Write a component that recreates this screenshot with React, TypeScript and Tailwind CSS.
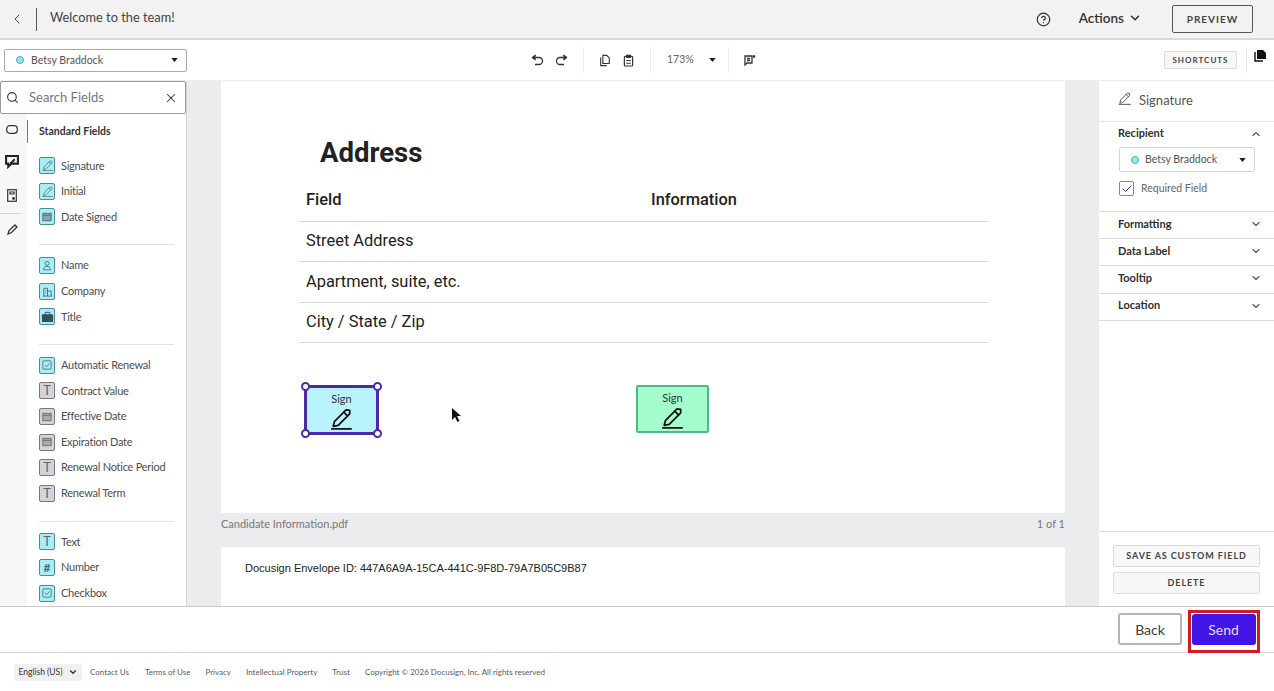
import React from "react";
import { ChevronLeft, ChevronDown, ChevronUp, CircleHelp, Search, X, Check } from "lucide-react";

const Pen = ({ size = 12, sw = 1.5 }: { size?: number; sw?: number }) => (
  <svg width={size} height={size} viewBox="0 0 24 24" fill="none" stroke="currentColor" strokeWidth={sw} strokeLinejoin="round" strokeLinecap="round">
    <path d="M3.5 20 L5 14.5 L17.5 2 L21.5 2.5 L21.5 6.5 L9 19 Z" />
    <path d="M15 4.5 L19 8.5" />
    <path d="M2 22.8 H23" />
  </svg>
);

const Caret = () => (
  <svg width="7" height="4" viewBox="0 0 8 5" className="shrink-0"><path d="M0 0H8L4 5Z" fill="#1c1c1c" /></svg>
);

const Glyph = ({ k }: { k: string }) => {
  const c = "#4d6670";
  if (k === "T") return <span className="text-[13px] leading-none text-[#5c6670]">T</span>;
  if (k === "#") return <span className="text-[12px] font-bold leading-none text-[#4d6670]">#</span>;
  if (k === "pen") return <span className="text-[#4d6670]"><Pen size={11} /></span>;
  if (k === "date") return <svg width="10" height="10" viewBox="0 0 12 12"><rect x="1" y="1.5" width="10" height="9" fill="#8aa3ad" stroke={c} /><path d="M1 4H11" stroke={c} /></svg>;
  if (k === "dategray") return <svg width="10" height="10" viewBox="0 0 12 12"><rect x="1" y="1.5" width="10" height="9" fill="#a9a9af" stroke="#66666c" /><path d="M1 4H11" stroke="#66666c" /></svg>;
  if (k === "user") return <svg width="10" height="11" viewBox="0 0 12 12" fill="none" stroke={c}><circle cx="6" cy="3.5" r="2.4" /><path d="M2 11.2C2 8.5 3.5 7 6 7s4 1.5 4 4.2z" /></svg>;
  if (k === "co") return <svg width="11" height="11" viewBox="0 0 12 12" fill="none" stroke={c}><path d="M2 11V2.5h4V11M6 5.5h4V11M1 11h10M3.5 5h1M3.5 7.5h1" /></svg>;
  if (k === "bag") return <svg width="13" height="12" viewBox="0 0 14 12"><rect x="1" y="3" width="12" height="8.5" rx="1" fill="#34505a" /><path d="M4.5 3.5V1h5v2.5" fill="none" stroke="#34505a" /></svg>;
  return <svg width="10" height="10" viewBox="0 0 12 12" fill="none" stroke={c}><rect x="1" y="1" width="10" height="10" rx="1" /><path d="M3.5 6l2 2 3.5-4" /></svg>;
};

const Field = ({ label, k, gray }: { label: string; k: string; gray?: boolean }) => (
  <div className="flex h-[25.6px] items-center gap-[6px]">
    <span className={`flex h-[17px] w-[16px] shrink-0 items-center justify-center rounded-[2px] border ${gray ? "border-[#77777d] bg-[#d3d3d8]" : "border-[#4a8c9b] bg-[#a9eef7]"}`}>
      <Glyph k={k} />
    </span>
    <span className="whitespace-nowrap text-[11px] tracking-[-0.25px] text-[#4d4d52]">{label}</span>
  </div>
);

const Sep = () => <span className="block h-[26px] w-px bg-[#ececec]" />;

const Acc = ({ label }: { label: string }) => (
  <div className="flex h-[27.2px] shrink-0 items-center justify-between border-b border-[#dcdcdc] pb-[2px] pl-[19px] pr-[12px]">
    <span className="text-[11px] font-bold text-[#2f2f33]">{label}</span>
    <ChevronDown size={12} strokeWidth={2.2} className="text-[#55555a]" />
  </div>
);

const Row = ({ text }: { text: string }) => (
  <div className="flex h-[40.4px] items-center border-b border-[#d8d8d8] pl-[7px] text-[16.4px] text-[#222]">{text}</div>
);

const Sign = ({ tone }: { tone: "blue" | "green" }) => (
  <div className={`flex flex-col items-center ${tone === "blue" ? "h-[50px] w-[75px] border-[3px] border-[#4a2aa8] bg-[#b9f3fd] pt-[4px]" : "h-[48px] w-[73px] rounded-[2px] border-2 border-[#4cb98a] bg-[#a3fdcd] pt-[4px]"}`}>
    <span className="text-[11px] leading-[14px] text-[#333]">Sign</span>
    <span className="-ml-[2px] mt-[2px] text-[#111]"><Pen size={22} sw={1.9} /></span>
  </div>
);

const Handle = ({ cls }: { cls: string }) => (
  <span className={`absolute h-[9px] w-[9px] rounded-full border-2 border-[#4a2aa8] bg-white ${cls}`} />
);

const Undo = ({ flip }: { flip?: boolean }) => (
  <svg width="13" height="12" viewBox="0 0 13 12" fill="none" stroke="#333" strokeWidth="1.3" className={flip ? "-scale-x-100" : ""}>
    <path d="M1.5 3.5H8a3.5 3.5 0 0 1 0 7H4" />
    <path d="M4.5 1L1.5 3.5L4.5 6" fill="#333" />
  </svg>
);

export default function App() {
  return (
    <div className="flex h-[691px] w-[1274px] flex-col overflow-hidden bg-white font-['Lato','Noto_Sans',sans-serif] text-[#333]">
      {/* header */}
      <header className="flex h-[40px] shrink-0 items-center border-b-2 border-[#d9d9db] bg-[#f2f2f2] pr-[21px]">
        <ChevronLeft size={16} strokeWidth={1.5} className="ml-[9px] text-[#444]" />
        <span className="ml-[11px] h-[23px] w-px bg-[#555]" />
        <span className="mb-[2px] ml-[13px] text-[12.8px] text-[#444]">Welcome to the team!</span>
        <CircleHelp size={15} strokeWidth={2} className="ml-auto text-[#333]" />
        <span className="mb-[2px] ml-[28px] flex items-center gap-[4px] text-[13.5px] font-semibold text-[#333]">Actions <ChevronDown size={14} strokeWidth={2.6} /></span>
        <button className="ml-[30px] h-[28px] w-[81px] rounded-[2px] border border-[#555] text-[10px] font-bold tracking-[1px] text-[#444]">PREVIEW</button>
      </header>

      {/* toolbar */}
      <div className="flex h-[41px] shrink-0 items-center border-b border-[#eeeeee] pl-[4px] pr-[7px]">
        <div className="flex h-[23px] w-[183px] items-center rounded-[2px] border border-[#a9a9ad] pl-[11px] pr-[8px]">
          <span className="h-[8px] w-[8px] rounded-full border border-[#4fa9c2] bg-[#8feaf5]" />
          <span className="ml-[7px] pt-[1px] text-[10.5px] text-[#555]">Betsy Braddock</span>
          <span className="ml-auto"><Caret /></span>
        </div>
        <div className="ml-[344px] flex items-center text-[#333]">
          <Undo />
          <span className="ml-[11px]"><Undo flip /></span>
          <span className="mx-[15px]"><Sep /></span>
          <svg width="12" height="13" viewBox="0 0 14 14" fill="none" stroke="#333" strokeWidth="1.3"><path d="M4.5 1H9l3 3v6.5H4.5z" /><path d="M2 3.5V13h7" /></svg>
          <svg width="11" height="13" viewBox="0 0 12 14" fill="none" stroke="#333" strokeWidth="1.3" className="ml-[12px]"><rect x="1.5" y="2.5" width="9" height="10.5" rx="1" /><path d="M4 1.5h4v2H4zM3.5 7h5M3.5 10h5" /></svg>
          <span className="mx-[16px]"><Sep /></span>
          <span className="text-[10.5px] text-[#666]">173%</span>
          <span className="ml-[15px]"><Caret /></span>
          <span className="ml-[12px] mr-[15px]"><Sep /></span>
          <svg width="12" height="12" viewBox="0 0 12 12" fill="none" stroke="#333" strokeWidth="1.3"><path d="M1 2h7v7H3l-2 2zM3 4.5h3M3 6.5h3" /><path d="M10 1v3M8.8 2.5h2.4" /></svg>
        </div>
        <button className="ml-auto h-[18px] w-[73px] rounded-[1px] border border-[#dcdcdc] bg-[#f7f7f7] text-[8px] font-bold tracking-[1px] text-[#444]">SHORTCUTS</button>
        <span className="ml-[9px]"><Sep /></span>
        <span className="mb-[10px] ml-[7px]">
          <svg width="13" height="13" viewBox="0 0 13 13"><path d="M3 1h6l3 3v6H3z" fill="#111" /><path d="M1 3v9h8" fill="none" stroke="#111" strokeWidth="1.4" /></svg>
        </span>
      </div>

      {/* main */}
      <div className="flex h-[526px] shrink-0 border-b border-[#c9c9cb]">
        {/* left panel */}
        <aside className="flex w-[187px] shrink-0 flex-col overflow-hidden border-r border-[#d4d4d6]">
          <div className="flex h-[33px] shrink-0 items-center rounded-[2px] border border-[#9a9a9e] bg-white pl-[5px] pr-[7px]">
            <Search size={13} strokeWidth={2} className="text-[#333]" />
            <span className="ml-[10px] text-[13px] text-[#77777c]">Search Fields</span>
            <X size={14} strokeWidth={1.8} className="ml-auto text-[#333]" />
          </div>
          <div className="flex min-h-0 flex-1">
            <div className="flex w-[27px] shrink-0 flex-col items-center bg-[#f7f7f7] pr-[3px] pt-[11px] text-[#333]">
              <svg width="12" height="9" viewBox="0 0 12 9" fill="none" stroke="#333" strokeWidth="1.2"><rect x="0.7" y="0.7" width="10.6" height="7.6" rx="3" /></svg>
              <svg width="14" height="14" viewBox="0 0 13 13" fill="none" stroke="#222" strokeWidth="1.9" className="mt-[21px]"><path d="M1 1h11v7H6l-3 3V8H1z" /><path d="M5 8l4-4" /></svg>
              <svg width="10" height="13" viewBox="0 0 10 13" fill="none" stroke="#333" strokeWidth="1.2" className="mt-[20px]"><rect x="0.7" y="0.7" width="8.6" height="11.6" /><path d="M3 3h4v2H3z" /><circle cx="6.5" cy="9.5" r=".8" fill="#333" /></svg>
              <div className="mt-[11px] h-px w-[22px] self-start bg-[#d8d8d8]" />
              <svg width="11" height="11" viewBox="0 0 11 11" fill="none" stroke="#333" strokeWidth="1.3" className="mt-[10px]"><path d="M1 10l1-3.5L8 1l2 2-5.5 5.5z" /></svg>
            </div>
            <div className="min-w-0 flex-1 px-[12px]">
              <div className="-ml-[12px] mt-[6px] flex h-[23px] items-center border-l border-[#77777c] pl-[11px] text-[10.5px] font-bold text-[#333]">Standard Fields</div>
              <div className="mt-[10px]">
                <Field label="Signature" k="pen" />
                <Field label="Initial" k="pen" />
                <Field label="Date Signed" k="date" />
              </div>
              <div className="mb-[8px] mt-[14px] h-px bg-[#e2e2e4]" />
              <Field label="Name" k="user" />
              <Field label="Company" k="co" />
              <Field label="Title" k="bag" />
              <div className="mb-[8px] mt-[14px] h-px bg-[#e2e2e4]" />
              <Field label="Automatic Renewal" k="check" />
              <Field label="Contract Value" k="T" gray />
              <Field label="Effective Date" k="dategray" gray />
              <Field label="Expiration Date" k="dategray" gray />
              <Field label="Renewal Notice Period" k="T" gray />
              <Field label="Renewal Term" k="T" gray />
              <div className="mb-[7px] mt-[15px] h-px bg-[#e2e2e4]" />
              <Field label="Text" k="T" />
              <Field label="Number" k="#" />
              <Field label="Checkbox" k="check" />
            </div>
          </div>
        </aside>

        {/* canvas */}
        <main className="flex min-w-0 flex-1 flex-col overflow-hidden bg-[#ecebed] px-[34px]">
          <section className="relative h-[432px] shrink-0 bg-white pl-[78px] pr-[77px]">
            <div className="font-['Roboto',sans-serif]">
              <h1 className="pl-[21px] pt-[54px] text-[27.5px] font-bold leading-[36px] text-[#222]">Address</h1>
              <div className="mt-[7px] flex h-[44px] items-center border-b border-[#d8d8d8] pl-[7px] pt-[1px] text-[16.4px] font-medium text-[#222]">
                <span className="w-[345px]">Field</span><span>Information</span>
              </div>
              <Row text="Street Address" />
              <Row text="Apartment, suite, etc." />
              <Row text="City / State / Zip" />
            </div>
            <div className="absolute left-[83px] top-[304px]">
              <Sign tone="blue" />
              <Handle cls="-left-[3px] -top-[3px]" />
              <Handle cls="-right-[3px] -top-[3px]" />
              <Handle cls="-bottom-[3px] -left-[3px]" />
              <Handle cls="-bottom-[3px] -right-[3px]" />
            </div>
            <div className="absolute left-[415px] top-[304px]"><Sign tone="green" /></div>
            <svg width="11" height="16" viewBox="0 0 11 16" className="absolute left-[230px] top-[326px]"><path d="M1 1V13L4 10L6.5 15L8.5 14L6 9H10Z" fill="#111" /></svg>
          </section>
          <div className="flex h-[34px] shrink-0 items-center justify-between pb-[12px] text-[11px] text-[#77777c]">
            <span>Candidate Information.pdf</span><span>1 of 1</span>
          </div>
          <section className="flex-1 bg-white pl-[24px] pt-[13px] font-['Liberation_Sans',sans-serif] text-[11px] text-[#222]">Docusign Envelope ID: 447A6A9A-15CA-441C-9F8D-79A7B05C9B87</section>
        </main>

        {/* right panel */}
        <aside className="flex w-[175px] shrink-0 flex-col bg-white">
          <div className="flex h-[41px] shrink-0 items-center gap-[8px] border-b border-[#e4e4e4] pl-[19px] text-[13px] text-[#555]">
            <span className="mb-[5px] text-[#333]"><Pen size={13} /></span>Signature
          </div>
          <div className="h-[90px] shrink-0 border-b border-[#dcdcdc] pl-[19px] pr-[12px]">
            <div className="flex h-[23px] items-center justify-between">
              <span className="text-[11px] font-bold text-[#2f2f33]">Recipient</span>
              <ChevronUp size={12} strokeWidth={2.2} className="text-[#55555a]" />
            </div>
            <div className="ml-[1px] mt-[2px] flex h-[25px] w-[136px] items-center rounded-[2px] border border-[#d4d4d6] pl-[11px] pr-[8px]">
              <span className="h-[8px] w-[8px] rounded-full border border-[#4fa9c2] bg-[#8feaf5]" />
              <span className="ml-[6px] pt-[1px] text-[10.5px] text-[#555]">Betsy Braddock</span>
              <span className="ml-auto"><Caret /></span>
            </div>
            <div className="ml-[1px] mt-[9px] flex items-center gap-[7px]">
              <span className="flex h-[15px] w-[15px] items-center justify-center rounded-[2px] border border-[#8a8a8e]"><Check size={12} strokeWidth={2} className="text-[#2b3f9c]" /></span>
              <span className="text-[10.5px] text-[#666]">Required Field</span>
            </div>
          </div>
          <Acc label="Formatting" />
          <Acc label="Data Label" />
          <Acc label="Tooltip" />
          <Acc label="Location" />
          <div className="mt-auto flex shrink-0 flex-col gap-[5px] border-t border-[#dcdcdc] px-[14px] pb-[12px] pt-[13px]">
            <button className="h-[22px] rounded-[2px] border border-[#dcdcdc] bg-[#f7f7f7] text-[9px] font-bold tracking-[0.9px] text-[#444]">SAVE AS CUSTOM FIELD</button>
            <button className="h-[22px] rounded-[2px] border border-[#dcdcdc] bg-[#f7f7f7] text-[9px] font-bold tracking-[0.9px] text-[#444]">DELETE</button>
          </div>
        </aside>
      </div>

      {/* action bar */}
      <div className="flex h-[46px] shrink-0 items-start justify-end gap-[6px] border-b border-[#d4d4d6] pr-[14px]">
        <button className="mt-[6px] h-[32px] w-[64px] rounded-[3px] border-2 border-[#b4b4b8] text-[14px] text-[#3c3c40]">Back</button>
        <span className="mt-[3px] flex h-[43px] w-[72px] justify-center border-[3px] border-[#d01c24] pt-[1px]">
          <button className="-ml-[1px] h-[31px] w-[64px] rounded-[3px] bg-[#4314e6] text-[14px] text-[#e4dcff]">Send</button>
        </span>
      </div>

      {/* footer */}
      <footer className="flex h-[38px] shrink-0 items-center pl-[14px] text-[8px] text-[#5a5a60]">
        <span className="flex h-[17px] w-[68px] items-center justify-center gap-[5px] whitespace-nowrap rounded-[2px] bg-[#f0f0f2] text-[8.5px] text-[#333]">English (US) <ChevronDown size={10} strokeWidth={3} /></span>
        <span className="ml-[8px]">Contact Us</span>
        <span className="ml-[16px]">Terms of Use</span>
        <span className="ml-[15px]">Privacy</span>
        <span className="ml-[15px]">Intellectual Property</span>
        <span className="ml-[15px]">Trust</span>
        <span className="ml-[15px]">Copyright © 2026 Docusign, Inc. All rights reserved</span>
      </footer>
    </div>
  );
}
